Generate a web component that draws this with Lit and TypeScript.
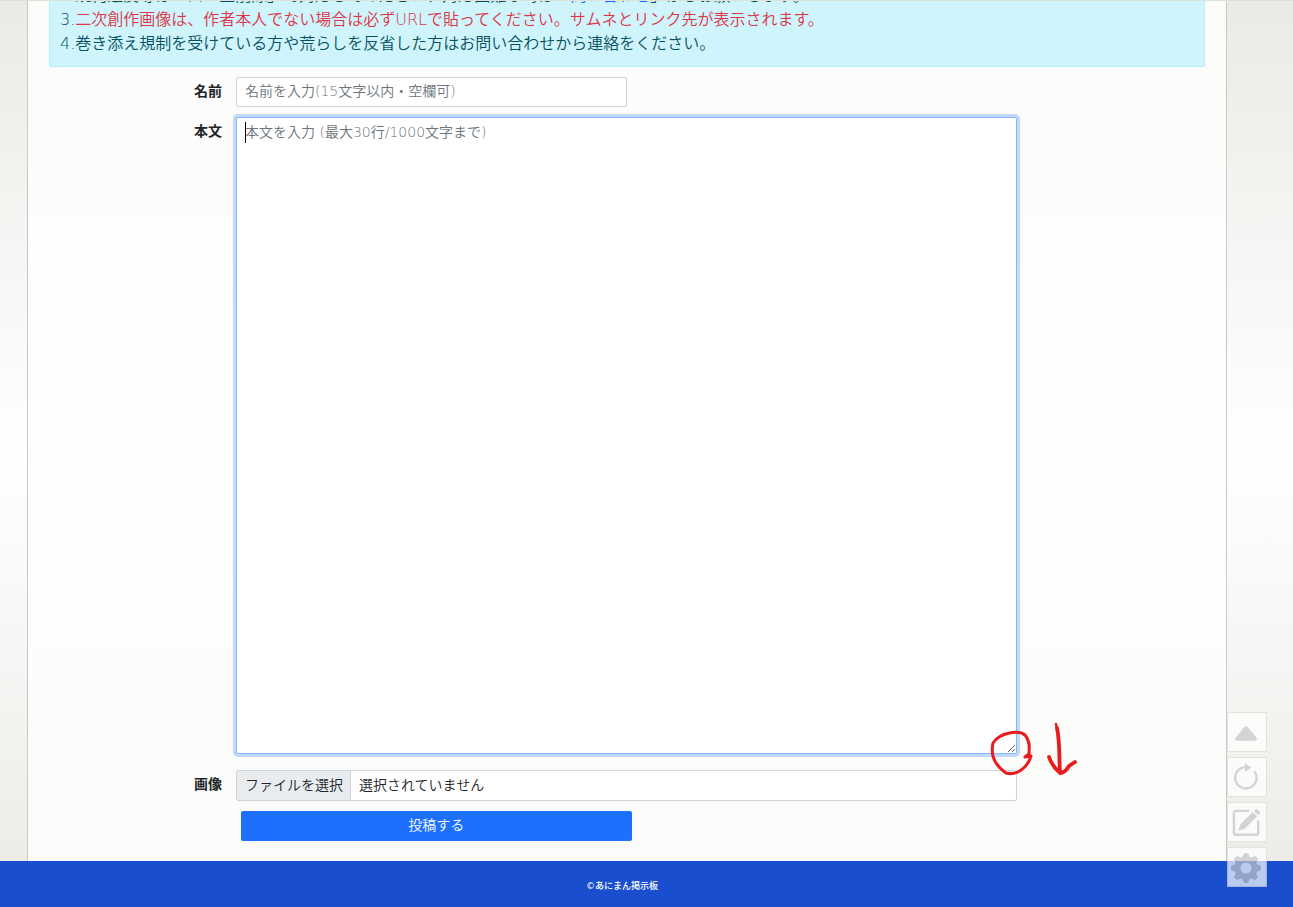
import { LitElement, html, css, svg } from "lit";
import { customElement, query } from "lit/decorators.js";

@customElement("app-root")
export class AppRoot extends LitElement {
  static styles = css`
    :host {
      display: block;
      font-family: "DejaVu Sans", "Noto Sans CJK JP", sans-serif;
      font-size: 14px;
      font-weight: 350;
      line-height: 21px;
      color: #212529;
    }
    *, *::before, *::after { box-sizing: border-box; }
    .page {
      position: relative;
      display: flex;
      flex-direction: column;
      min-height: 100vh;
      border-top: 1px solid #dfe1dd;
      background: linear-gradient(#ebeae6, #ffffff 50%, #ebeae6);
    }
    .board {
      flex: 1;
      display: flex;
      flex-direction: column;
      margin: 0 66px 0 27px;
      padding: 0 21px 20px;
      border: solid #c8c8c8;
      border-width: 0 1px;
      background: linear-gradient(#fbfbf9, #ffffff 50%, #fbfbf9);
    }
    .notice {
      height: 66px;
      display: flex;
      flex-direction: column;
      justify-content: flex-end;
      overflow: hidden;
      padding: 0 10px 10px;
      border: 1px solid #b6effb;
      border-top: 0;
      border-radius: 0 0 3px 3px;
      background: #cff4fc;
      color: #055160;
      font-size: 16px;
      line-height: 24px;
    }
    .notice p { margin: 0; flex: none; white-space: nowrap; }
    .notice a { color: #0d6efd; text-decoration: none; }
    .warn { color: #dc3545; }
    form {
      flex: 1;
      display: grid;
      grid-template-columns: 187px minmax(0, 1fr) 188px;
      grid-template-rows: 30px 1fr 31px 30px;
      padding-top: 10px;
      row-gap: 10px;
    }
    label {
      grid-column: 1;
      padding: 4px 14px 0 0;
      text-align: right;
      font-weight: 700;
      color: #212529;
    }
    input, textarea, button {
      font: inherit;
      color: inherit;
    }
    .field {
      grid-column: 2;
      width: 100%;
      margin: 0;
      padding: 2px 8px 4px;
      border: 1px solid #ced4da;
      border-radius: 2px;
      background: #ffffff;
      outline: none;
    }
    .field::placeholder { color: #6c757d; opacity: 1; }
    .half { width: 50%; }
    .message {
      display: block;
      height: 637px;
      padding: 4px 8px;
      resize: vertical;
      caret-color: transparent;
    }
    .message:focus {
      border-color: #86b7fe;
      box-shadow: 0 0 0 3px rgba(13, 110, 253, 0.25);
    }
    .body-cell { position: relative; grid-column: 2; padding-bottom: 6px; }
    .body-cell:focus-within::before {
      content: "";
      position: absolute;
      left: 9px;
      top: 5px;
      width: 1px;
      height: 21px;
      background: #000000;
    }
    .file {
      display: flex;
      padding: 0;
      overflow: hidden;
    }
    .file button {
      padding: 0 7px 0 8px;
      border: 0;
      border-right: 1px solid #ced4da;
      background: #e9ecef;
    }
    .file output { padding: 4px 8px; }
    .submit {
      grid-column: 2;
      width: 50%;
      margin-left: 5px;
      padding: 0 0 2px;
      border: 0;
      border-radius: 2px;
      background: #1c70fd;
      color: #ffffff;
    }
    footer {
      height: 46px;
      display: flex;
      align-items: center;
      justify-content: center;
      padding: 4px 49px 0 0;
      background: #194fce;
      color: #ffffff;
      font-size: 9px;
      font-weight: 500;
      line-height: 12px;
    }
    .tools {
      position: fixed;
      right: 26px;
      bottom: 20px;
      display: grid;
      gap: 5px;
    }
    .tools button {
      width: 40px;
      height: 40px;
      padding: 0;
      border: 1px solid #dddddb;
      background: #ffffff;
      color: #c8c8c8;
      opacity: 0.7;
    }
    .tools svg { display: block; width: 38px; height: 38px; }
    .marks {
      position: absolute;
      right: 213px;
      bottom: 128px;
      width: 90px;
      height: 60px;
      pointer-events: none;
    }
  `;

  @query("#message") private message!: HTMLTextAreaElement;

  firstUpdated() {
    this.message.focus({ preventScroll: true });
  }

  private toolIcons = [
    { name: "上へ", art: svg`<path d="M16.2 14.300Q18 12.400 19.800 14.300L28.500 24.800Q30 27.700 27 27.700H9Q6 27.700 7.500 24.800Z" fill="currentColor"/>` },
    { name: "更新", art: svg`<path d="M26.300 13.200A10.700 10.700 0 1 1 17 9.100" fill="none" stroke="currentColor" stroke-width="2.300"/><path d="M17 5.300 23.700 9.500 17 13.700Z" fill="currentColor"/>` },
    { name: "書く", art: svg`<path d="M21.300 7.900H8Q5.900 7.900 5.900 10V29.700Q5.900 31.800 8 31.800H28Q30.200 31.800 30.200 29.700V17.500" fill="none" stroke="currentColor" stroke-width="2.400"/><path d="M10.300 27.800 12.300 21.600 24.600 9 29 13.300 16.700 25.700ZM25.800 7.900 27.400 6.400Q28.500 5.500 29.500 6.400L31.700 8.600Q32.500 9.600 31.700 10.600L30.100 12.200Z" fill="currentColor"/>` },
    { name: "設定", art: svg`<g transform="translate(18 20)" fill="currentColor"><circle r="8.500" fill="none" stroke="currentColor" stroke-width="6"/>${[0, 45, 90, 135, 180, 225, 270, 315].map((a) => svg`<path transform=${`rotate(${a})`} d="M-5-9.500Q-3.200-11-2.700-13.500-2.500-15-1-15H1Q2.500-15 2.700-13.500 3.200-11 5-9.500Z"/>`)}</g>` },
  ];

  render() {
    return html`
      <div class="page">
        <main class="board">
          <div class="notice">
            <p>2.規約違反等は「スレ主削除」で対応してください、対応困難な時は「<a href="#">問い合わせ</a>」からお願いします。</p>
            <p>3.<span class="warn">二次創作画像は、作者本人でない場合は必ずURLで貼ってください。サムネとリンク先が表示されます。</span></p>
            <p>4.巻き添え規制を受けている方や荒らしを反省した方はお問い合わせから連絡をください。</p>
          </div>
          <form @submit=${(e: Event) => e.preventDefault()}>
            <label for="name">名前</label>
            <input class="field half" id="name" type="text" placeholder="名前を入力(15文字以内・空欄可)" />
            <label for="message">本文</label>
            <div class="body-cell">
              <textarea class="field message" id="message" placeholder="本文を入力 (最大30行/1000文字まで)"></textarea>
            </div>
            <label for="file">画像</label>
            <div class="field file">
              <button id="file" type="button">ファイルを選択</button>
              <output for="file">選択されていません</output>
            </div>
            <button class="submit" type="submit">投稿する</button>
          </form>
        </main>
        <footer>©あにまん掲示板</footer>
        <svg class="marks" viewBox="0 0 90 60" fill="none" stroke="#e81c1c" stroke-width="3" stroke-linecap="round" stroke-linejoin="round" aria-hidden="true">
          <path d="M34 16C28 11 9 13 2 24C-1 37 5 47 15 54C26 57 37 48 40 37M34 16C40 23 38 30 38 35L34 38L40 37" transform="translate(1 0)"/>
          <path d="M66 5L67 10" stroke-width="2.500"/>
          <path d="M67 9C70 23 69 38 70 54M59 38Q62 47 70 54Q75 54 79 47L85 43" stroke-width="3.800"/>
        </svg>
        <nav class="tools" aria-label="ツール">
          ${this.toolIcons.map((t) => html`<button type="button" aria-label=${t.name}><svg viewBox="0 0 38 38" aria-hidden="true">${t.art}</svg></button>`)}
        </nav>
      </div>
    `;
  }
}
